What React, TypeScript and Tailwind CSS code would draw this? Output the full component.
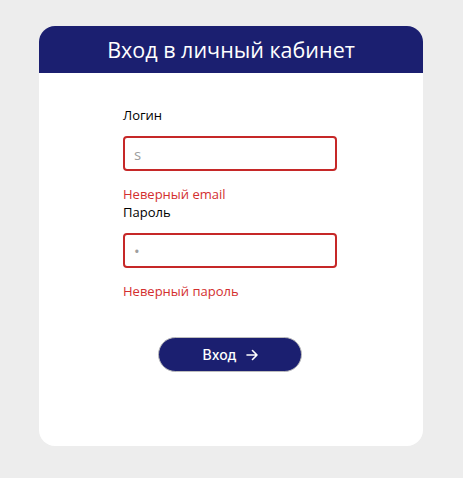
export default function App() {
  return (
    <div className="min-h-screen w-full bg-[#ededed] pt-[26px]" style={{ fontFamily: '"Open Sans", "Noto Sans", sans-serif' }}>
      <div className="ml-[39px] w-[384px] h-[420px] bg-white rounded-[16px] overflow-hidden">
        {/* Header */}
        <div className="h-[47px] bg-[#1b1f70] flex items-center justify-center">
          <h1 className="text-white text-[21.5px] leading-none">Вход в личный кабинет</h1>
        </div>

        {/* Form */}
        <div className="w-[214px] ml-[84px] pt-[33px] flex flex-col">
          <label className="text-[13px] leading-[18px] text-black">Логин</label>
          <input
            className="mt-[12px] h-[35px] w-full rounded-[4px] border-2 border-[#c62828] px-[9px] text-[15px] outline-none placeholder:text-[#9e9e9e]"
            placeholder="s"
          />
          <span className="mt-[14px] text-[13px] leading-[18px] text-[#d32f2f]">Неверный email</span>
          <label className="text-[13px] leading-[18px] text-black">Пароль</label>
          <input
            type="password"
            className="mt-[12px] h-[35px] w-full rounded-[4px] border-2 border-[#c62828] px-[9px] text-[15px] outline-none placeholder:text-[#9e9e9e]"
            placeholder="•"
          />
          <span className="mt-[14px] text-[13px] leading-[18px] text-[#d32f2f]">Неверный пароль</span>

          <button className="mt-[37px] ml-[35px] h-[35px] w-[144px] rounded-full bg-[#1b1f70] border border-[#bdbdbd] text-white text-[14px] flex items-center justify-center gap-[9px]" style={{ fontFamily: 'Inter, "Noto Sans", sans-serif' }}>
            <span className="font-medium">Вход</span>
            <svg width="12" height="12" viewBox="0 0 12 12" fill="none">
              <path d="M1 6h10M6.5 1.5L11 6l-4.5 4.5" stroke="white" strokeWidth="1.6" strokeLinecap="round" strokeLinejoin="round" />
            </svg>
          </button>
        </div>
      </div>
    </div>
  );
}
